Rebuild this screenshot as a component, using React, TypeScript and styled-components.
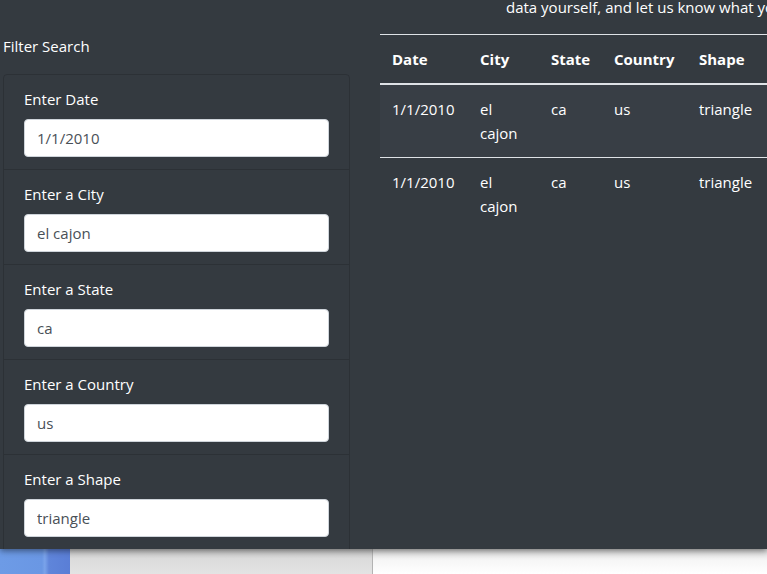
import styled, { createGlobalStyle } from "styled-components";

const GlobalStyle = createGlobalStyle`
    html, body {
        margin: 0;
        padding: 0;
        background: #ffffff;
    }
    * {
        box-sizing: border-box;
    }
`;

const Page = styled.div`
    width: 767px;
    height: 574px;
    overflow: hidden;
    font-family: "Open Sans", "Noto Sans", sans-serif;
    font-size: 15px;
    line-height: 24px;
`;

const Dark = styled.div`
    position: relative;
    z-index: 1;
    height: 549px;
    overflow: hidden;
    background: #343a40;
    color: #ffffff;
    box-shadow: 0 2px 6px rgba(0, 0, 0, 0.45);
`;

const Intro = styled.p`
    margin: 0;
    height: 20px;
    padding-left: 506px;
    white-space: nowrap;
    line-height: 14px;
`;

const Main = styled.div`
    display: flex;
    gap: 30px;
    padding-top: 14px;
    padding-left: 3px;
`;

const Sidebar = styled.div`
    flex: 0 0 347px;
`;

const Title = styled.div`
    margin-bottom: 16px;
`;

const Panel = styled.ul`
    list-style: none;
    margin: 0;
    padding: 0;
`;

const Item = styled.li`
    padding: 12px 20px;
    border: 1px solid rgba(0, 0, 0, 0.15);
    & + & {
        border-top: none;
    }
    &:first-child {
        border-radius: 4px 4px 0 0;
    }
`;

const Label = styled.label`
    display: block;
    margin-bottom: 8px;
`;

const Input = styled.input`
    display: block;
    width: 100%;
    height: 38px;
    padding: 0 12px;
    border: 1px solid #ced4da;
    border-radius: 4px;
    background: #ffffff;
    color: #495057;
    font: inherit;
    outline: none;
`;

const TableWrap = styled.div`
    flex: 1;
    min-width: 0;
`;

const Table = styled.table`
    width: 420px;
    border-collapse: collapse;
    table-layout: fixed;
    color: #ffffff;
`;

const Th = styled.th`
    padding: 12px;
    text-align: left;
    font-weight: 700;
    vertical-align: bottom;
    border-top: 1px solid #dee2e6;
    border-bottom: 2px solid #dee2e6;
`;

const Row = styled.tr<{ $striped?: boolean; $divided?: boolean }>`
    background: ${(p) => (p.$striped ? "#383e45" : "transparent")};
    border-top: ${(p) => (p.$divided ? "1px solid #dee2e6" : "none")};
`;

const Td = styled.td`
    padding: 12px;
    vertical-align: top;
`;

const Bottom = styled.div`
    display: flex;
    height: 25px;
`;

const Thumb = styled.div`
    flex: 0 0 70px;
    background: linear-gradient(90deg, #6d9be6 0%, #6a97e4 60%, #7aa3ea 64%, #5f85da 70%, #5a7ed6 100%);
`;

const Gray = styled.div`
    flex: 0 0 303px;
    border-right: 1px solid #b3b3b3;
    background: linear-gradient(180deg, #c6c6c6 0%, #dcdcdc 40%, #e3e3e3 100%);
`;

const White = styled.div`
    flex: 1;
    background: linear-gradient(180deg, #d8d8d8 0%, #f6f6f6 45%, #ffffff 100%);
`;

const filters = [
    { label: "Enter Date", value: "1/1/2010" },
    { label: "Enter a City", value: "el cajon" },
    { label: "Enter a State", value: "ca" },
    { label: "Enter a Country", value: "us" },
    { label: "Enter a Shape", value: "triangle" },
];

const columns = [
    { name: "Date", width: 88 },
    { name: "City", width: 71 },
    { name: "State", width: 63 },
    { name: "Country", width: 85 },
    { name: "Shape", width: 113 },
];

const rows = [
    ["1/1/2010", "el cajon", "ca", "us", "triangle"],
    ["1/1/2010", "el cajon", "ca", "us", "triangle"],
];

function App() {
    return (
        <Page>
            <GlobalStyle />
            <Dark>
                <Intro>data yourself, and let us know what you find</Intro>
                <Main>
                    <Sidebar>
                        <Title>Filter Search</Title>
                        <Panel>
                            {filters.map((f) => (
                                <Item key={f.label}>
                                    <Label>{f.label}</Label>
                                    <Input defaultValue={f.value} />
                                </Item>
                            ))}
                        </Panel>
                    </Sidebar>
                    <TableWrap>
                        <Table>
                            <colgroup>
                                {columns.map((c) => (
                                    <col key={c.name} style={{ width: c.width }} />
                                ))}
                            </colgroup>
                            <thead>
                                <tr>
                                    {columns.map((c) => (
                                        <Th key={c.name}>{c.name}</Th>
                                    ))}
                                </tr>
                            </thead>
                            <tbody>
                                {rows.map((r, i) => (
                                    <Row key={i} $striped={i % 2 === 0} $divided={i > 0}>
                                        {r.map((cell, j) => (
                                            <Td key={j}>{cell}</Td>
                                        ))}
                                    </Row>
                                ))}
                            </tbody>
                        </Table>
                    </TableWrap>
                </Main>
            </Dark>
            <Bottom>
                <Thumb />
                <Gray />
                <White />
            </Bottom>
        </Page>
    );
}

export default App;
